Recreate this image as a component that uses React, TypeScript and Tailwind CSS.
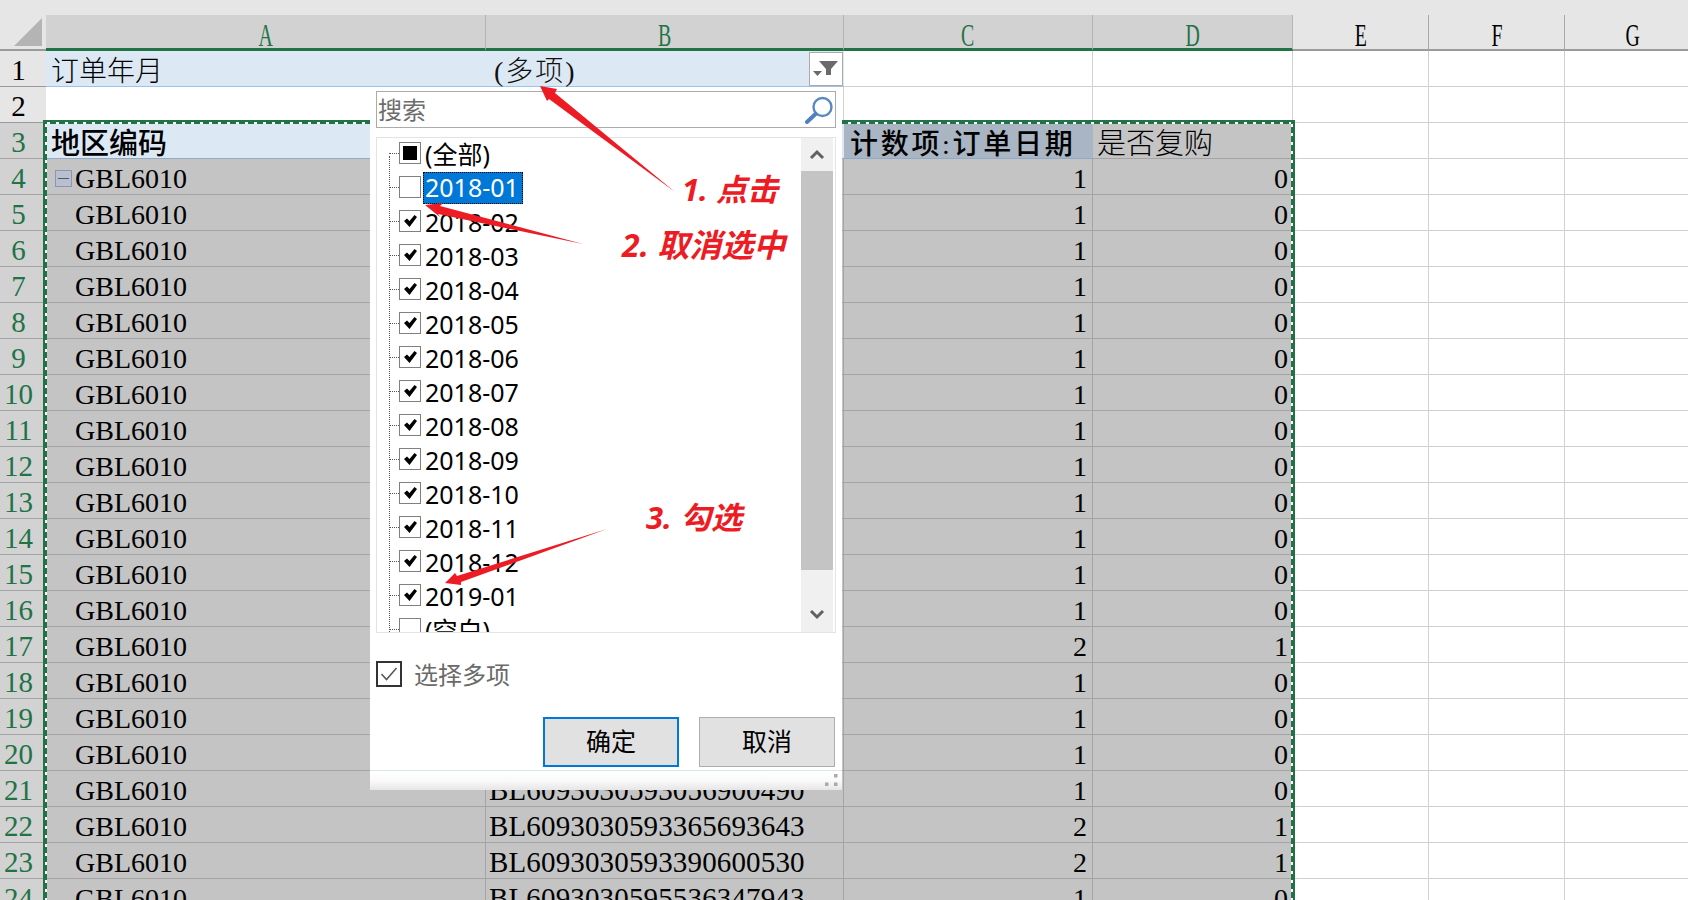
const colsClass = "grid grid-cols-[46px_440px_358px_249px_200px_136px_136px_136px] grid-rows-[36px]";
const sheetFont = "font-['Liberation_Serif','Noto_Sans_CJK_SC',serif]";
const uiFont = "font-['Noto_Sans','Noto_Sans_CJK_SC',sans-serif]";

const bColumn: Record<number, string> = {
  21: "BL6093030593056900490",
  22: "BL6093030593365693643",
  23: "BL6093030593390600530",
  24: "BL6093030595536347943",
};
const countColumn: Record<number, [number, number]> = {
  17: [2, 1],
  22: [2, 1],
  23: [2, 1],
};
const dataRows = Array.from({ length: 21 }, (_, i) => i + 4);
const months = [
  "2018-02", "2018-03", "2018-04", "2018-05", "2018-06", "2018-07",
  "2018-08", "2018-09", "2018-10", "2018-11", "2018-12", "2019-01",
];

function ColHead({ label, active }: { label: string; active?: boolean }) {
  return (
    <div
      className={
        active
          ? "flex items-center justify-center border-r border-[#b4b4b4] border-b-[3px] border-b-[#217346] bg-[#d2d2d2] pt-[7px] text-[#217346]"
          : "flex items-center justify-center border-r border-[#a8a8a8] border-b-[2px] border-b-[#9a9a9a] bg-[#e6e6e6] pt-[6px] text-black"
      }
    >
      <span className="inline-block scale-x-[0.62] text-[32px] leading-none">{label}</span>
    </div>
  );
}

function RowHead({ n }: { n: number }) {
  const active = n >= 3;
  return (
    <div
      className={
        active
          ? "flex items-center justify-center border-b border-[#a4a4a4] bg-[#d2d2d2] pt-[4px] pr-[9px] text-[29px] text-[#217346]"
          : "flex items-center justify-center border-b border-[#9a9a9a] bg-[#e6e6e6] pt-[4px] pr-[9px] text-[29px] text-black"
      }
    >
      {n}
    </div>
  );
}

function Blank() {
  return <div className="border-r border-b border-[#d0d0d0] bg-white" />;
}

function Check() {
  return (
    <svg width="13" height="12" viewBox="0 0 13 12">
      <path d="M0 6 L3 3.5 L5.5 6 L10.5 0 L13 2 L5.5 12 Z" fill="#000" />
    </svg>
  );
}

function ListItem({ label, state, selected }: { label: string; state: "on" | "off" | "mixed"; selected?: boolean }) {
  return (
    <div className="flex h-[34px] shrink-0 items-center">
      <div className="ml-[12px] w-[10px] border-t border-dotted border-[#555]" />
      <div className="flex h-[22px] w-[22px] shrink-0 items-center justify-center border border-[#808080] bg-white">
        {state === "on" && <Check />}
        {state === "mixed" && <div className="h-[14px] w-[14px] bg-black" />}
      </div>
      <div
        className={
          selected
            ? "mt-[1px] ml-[2px] flex h-[32px] items-center border border-dotted border-[#ff9a00] bg-[#0078d7] pr-[3px] pl-[1px] text-[25px] text-white outline-1 outline-black outline-dotted -outline-offset-1"
            : "mt-[1px] ml-[2px] px-[2px] text-[25px] leading-[32px] text-black"
        }
      >
        {label}
      </div>
    </div>
  );
}

function FilterDialog() {
  return (
    <div className={`${uiFont} absolute top-[87px] left-[370px] z-10 flex h-[703px] w-[472px] flex-col bg-white`}>
      {/* Search */}
      <div className="mx-[6px] mt-[4px] flex h-[37px] items-center justify-between border border-[#ababab] pr-[1px] pl-[1px]">
        <span className="text-[24px] text-[#6d6d6d]">搜索</span>
        <svg width="30" height="28" viewBox="0 0 30 28" fill="none">
          <circle cx="18.5" cy="11" r="9" stroke="#5a8ac0" strokeWidth="2.4" />
          <path d="M11.5 18 L3 26" stroke="#4f81bd" strokeWidth="4" strokeLinecap="round" />
        </svg>
      </div>

      {/* Tree list */}
      <div className="relative mx-[6px] mt-[9px] flex h-[496px] border border-[#e3e3e3]">
        <div className="absolute top-[18px] bottom-0 left-[12px] border-l border-dotted border-[#555]" />
        <div className="flex flex-1 flex-col overflow-hidden">
          <div className="-mt-[2px] flex flex-col">
            <ListItem label="(全部)" state="mixed" />
            <ListItem label="2018-01" state="off" selected />
            {months.map((m) => (
              <ListItem key={m} label={m} state="on" />
            ))}
            <ListItem label="(空白)" state="off" />
          </div>
        </div>
        <div className="mr-[2px] flex w-[32px] flex-col bg-[#f0f0f0]">
          <div className="flex h-[33px] items-center justify-center">
            <svg width="16" height="11" viewBox="0 0 16 11" fill="none">
              <path d="M2 9 L8 3 L14 9" stroke="#606060" strokeWidth="3" />
            </svg>
          </div>
          <div className="h-[399px] bg-[#c4c4c4]" />
          <div className="flex flex-1 items-end justify-center pb-[12px]">
            <svg width="16" height="11" viewBox="0 0 16 11" fill="none">
              <path d="M2 2 L8 8 L14 2" stroke="#606060" strokeWidth="3" />
            </svg>
          </div>
        </div>
      </div>

      {/* Multi select */}
      <div className="mx-[6px] mt-[27px] flex items-center">
        <div className="flex h-[26px] w-[26px] items-center justify-center border-2 border-[#333] bg-white">
          <svg width="18" height="16" viewBox="0 0 18 16" fill="none">
            <path d="M1.5 8 L6.5 13.5 L16.5 2" stroke="#555" strokeWidth="1.5" />
          </svg>
        </div>
        <span className="mt-[3px] ml-[12px] text-[24px] leading-none text-[#6a6a6a]">选择多项</span>
      </div>

      {/* Buttons */}
      <div className="mt-[30px] flex justify-end gap-[20px] pr-[7px]">
        <button className="h-[50px] w-[136px] border-2 border-[#0078d7] bg-[#e1e1e1] text-[25px] text-black">确定</button>
        <button className="h-[50px] w-[136px] border border-[#adadad] bg-[#e1e1e1] text-[25px] text-black">取消</button>
      </div>

      {/* Resize footer */}
      <div className="mt-[3px] flex flex-1 items-end justify-end border-t border-[#d9e6ec] bg-gradient-to-b from-white via-[#fafafa] to-[#e6e6e6] pr-[4px] pb-[3px]">
        <svg width="13" height="13" viewBox="0 0 13 13" fill="#aaa">
          <rect x="9" y="0" width="3.5" height="3.5" />
          <rect x="0" y="8.5" width="3.5" height="3.5" />
          <rect x="9" y="8.5" width="3.5" height="3.5" />
        </svg>
      </div>
    </div>
  );
}

export default function App() {
  return (
    <div className={`${sheetFont} relative h-[900px] w-[1688px] overflow-hidden bg-white`}>
      <div className="h-[15px] bg-[#e6e6e6]" />

      {/* Column letters */}
      <div className={colsClass}>
        <div className="flex items-end justify-end border-b-[2px] border-[#9a9a9a] bg-[#e6e6e6] pr-[4px] pb-[3px]">
          <svg width="28" height="28" viewBox="0 0 28 28">
            <path d="M28 0 V28 H0 Z" fill="#b4b4b4" />
          </svg>
        </div>
        <ColHead label="A" active />
        <ColHead label="B" active />
        <ColHead label="C" active />
        <ColHead label="D" active />
        <ColHead label="E" />
        <ColHead label="F" />
        <ColHead label="G" />
      </div>

      {/* Row 1: report filter */}
      <div className={colsClass}>
        <RowHead n={1} />
        <div className="flex items-center border-b border-[#9dc3e6] bg-[#dce9f5] pt-[6px] pl-[5px] text-[28px] font-light text-black">订单年月</div>
        <div className="flex items-center justify-between border-b border-[#9dc3e6] bg-[#dce9f5] pr-[1px] pl-[8px] text-[28px] font-light tracking-[2px] text-[#111]">
          <span className="mt-[6px]">(多项)</span>
          <div className="flex h-[34px] w-[34px] items-center justify-center border border-[#ababab] bg-white">
            <svg width="26" height="18" viewBox="0 0 26 18" fill="#6a6a6a">
              <path d="M6 1 H25 L18 9 V15 H13 V9 Z" />
              <path d="M0 11 H9 L4.5 16 Z" />
            </svg>
          </div>
        </div>
        <Blank />
        <Blank />
        <Blank />
        <Blank />
        <Blank />
      </div>

      {/* Row 2 */}
      <div className={colsClass}>
        <RowHead n={2} />
        <div className="border-b border-[#d0d0d0] bg-white" />
        <Blank />
        <Blank />
        <Blank />
        <Blank />
        <Blank />
        <Blank />
      </div>

      {/* Row 3: pivot headers */}
      <div className={colsClass}>
        <RowHead n={3} />
        <div className="flex items-center border-b border-[#8fa9c9] bg-[#dce9f5] pt-[8px] pl-[5px] text-[29px] font-medium text-black">地区编码</div>
        <div className="border-b border-[#8fa9c9] bg-[#dce9f5]" />
        <div className="flex items-center border-b border-[#8fa9c9] bg-[#a9b5c2] pt-[8px] pl-[6px] text-[28px] font-medium tracking-[2.7px] whitespace-nowrap text-black">计数项:订单日期</div>
        <div className="flex items-center border-b border-[#a4a4a4] bg-[#c4c4c4] pt-[8px] pl-[4px] text-[29px] font-light text-black">是否复购</div>
        <Blank />
        <Blank />
        <Blank />
      </div>

      {/* Data rows */}
      {dataRows.map((n) => {
        const [count, repeat] = countColumn[n] ?? [1, 0];
        return (
          <div key={n} className={colsClass}>
            <RowHead n={n} />
            <div className="flex items-center border-r border-b border-[#a4a4a4] bg-[#c4c4c4] pt-[4px] text-[28px] text-black">
              {n === 4 ? (
                <div className="mr-[3px] ml-[9px] flex h-[17px] w-[17px] items-center justify-center border border-[#8b96b0] bg-[#b9bfcc]">
                  <div className="h-[1px] w-[11px] bg-[#4a5a7a]" />
                </div>
              ) : (
                <div className="w-[29px]" />
              )}
              GBL6010
            </div>
            <div className="flex items-center border-r border-b border-[#a4a4a4] bg-[#c4c4c4] pt-[4px] pl-[3px] text-[29px] tracking-[0.15px] text-black">{bColumn[n]}</div>
            <div className="flex items-center justify-end border-r border-b border-[#a4a4a4] bg-[#c4c4c4] pt-[4px] pr-[5px] text-[28px] text-black">{count}</div>
            <div className="flex items-center justify-end border-b border-[#a4a4a4] bg-[#c4c4c4] pt-[4px] pr-[5px] text-[28px] text-black">{repeat}</div>
            <Blank />
            <Blank />
            <Blank />
          </div>
        );
      })}

      {/* Copy marquee round the pivot table */}
      <div className="pointer-events-none absolute top-[120px] left-[43px] h-[800px] w-[1252px] border-4 border-[#217346]">
        <div className="absolute -top-[2px] right-0 left-0 h-[2px] bg-[repeating-linear-gradient(90deg,#fff_0_3px,transparent_3px_9px)]" />
        <div className="absolute top-0 bottom-0 -left-[2px] w-[2px] bg-[repeating-linear-gradient(180deg,#fff_0_3px,transparent_3px_9px)]" />
        <div className="absolute top-0 -right-[2px] bottom-0 w-[2px] bg-[repeating-linear-gradient(180deg,#fff_0_3px,transparent_3px_9px)]" />
      </div>

      <FilterDialog />

      {/* Red annotation arrows */}
      <svg className="pointer-events-none absolute top-0 left-0 z-20" width="1688" height="900" fill="#ed1c24">
        <polygon points="540,86 557,89 555,93 675,192 549,99 547,101" />
        <polygon points="425,205 443,203 440,206 583,244 438,214 440,217" />
        <polygon points="445,583 455,573 457,576 607,529 461,582 461,585" />
      </svg>
      <div className={`${uiFont} absolute top-[166px] left-[682px] z-20 text-[31px] font-bold whitespace-nowrap text-[#ed1c24] italic`}>1. 点击</div>
      <div className={`${uiFont} absolute top-[221px] left-[622px] z-20 text-[32px] font-bold whitespace-nowrap text-[#ed1c24] italic`}>2. 取消选中</div>
      <div className={`${uiFont} absolute top-[494px] left-[646px] z-20 text-[31px] font-bold whitespace-nowrap text-[#ed1c24] italic`}>3. 勾选</div>
    </div>
  );
}
